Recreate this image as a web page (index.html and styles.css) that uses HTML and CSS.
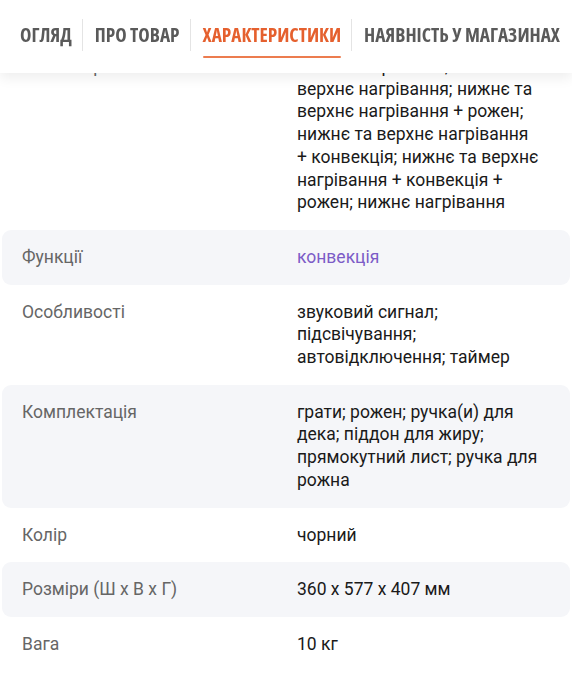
FILE: index.html
```html
<!DOCTYPE html>
<html lang="uk">
<head>
<meta charset="utf-8">
<title>Характеристики</title>
<link rel="stylesheet" href="styles.css">
</head>
<body>
<nav class="tabs">
  <a class="tab"><span class="tab-label">ОГЛЯД</span></a>
  <div class="sep"></div>
  <a class="tab"><span class="tab-label">ПРО ТОВАР</span></a>
  <div class="sep"></div>
  <a class="tab tab-active"><span class="tab-label">ХАРАКТЕРИСТИКИ</span><span class="tab-underline"></span></a>
  <div class="sep"></div>
  <a class="tab"><span class="tab-label">НАЯВНІСТЬ У МАГАЗИНАХ</span></a>
</nav>
<main class="specs">
  <div class="spec-row">
    <div class="spec-label">Режими роботи</div>
    <div class="spec-value">нижнє нагрівання; нижнє та<br>верхнє нагрівання; нижнє та<br>верхнє нагрівання + рожен;<br>нижнє та верхнє нагрівання<br>+ конвекція; нижнє та верхнє<br>нагрівання + конвекція +<br>рожен; нижнє нагрівання</div>
  </div>
  <div class="spec-row">
    <div class="spec-label">Функції</div>
    <div class="spec-value"><a class="spec-link">конвекція</a></div>
  </div>
  <div class="spec-row">
    <div class="spec-label">Особливості</div>
    <div class="spec-value">звуковий сигнал;<br>підсвічування;<br>автовідключення; таймер</div>
  </div>
  <div class="spec-row">
    <div class="spec-label">Комплектація</div>
    <div class="spec-value">грати; рожен; ручка(и) для<br>дека; піддон для жиру;<br>прямокутний лист; ручка для<br>рожна</div>
  </div>
  <div class="spec-row">
    <div class="spec-label">Колір</div>
    <div class="spec-value">чорний</div>
  </div>
  <div class="spec-row">
    <div class="spec-label">Розміри (Ш х В х Г)</div>
    <div class="spec-value">360 x 577 x 407 мм</div>
  </div>
  <div class="spec-row">
    <div class="spec-label">Вага</div>
    <div class="spec-value">10 кг</div>
  </div>
</main>
</body>
</html>
```
FILE: styles.css
```css
html, body {
  margin: 0;
  padding: 0;
  background: #ffffff;
}

body {
  font-family: Roboto, "Liberation Sans", sans-serif;
  color: #1a1a1a;
}

.tabs {
  position: fixed;
  top: 0;
  left: 0;
  right: 0;
  z-index: 10;
  height: 73px;
  box-sizing: border-box;
  padding: 19px 0 0 8px;
  display: flex;
  align-items: flex-start;
  background: #ffffff;
  box-shadow: 0 5px 12px rgba(0, 0, 0, 0.07);
  white-space: nowrap;
  overflow: hidden;
}

.tab {
  display: flex;
  flex-direction: column;
  padding: 0 10px 0 12px;
  font-family: "Open Sans", sans-serif;
  font-stretch: 75%;
  font-weight: 700;
  font-size: 19.3px;
  color: #5a5a5a;
  cursor: pointer;
}

.tab-label {
  display: block;
  line-height: 32px;
}

.tab-active {
  color: #e5602e;
}

.tab-underline {
  display: block;
  height: 2px;
  margin-top: 5px;
  background: #ec7c4f;
  border-radius: 1px;
}

.sep {
  flex: none;
  width: 1px;
  height: 32px;
  background: #e4e4e4;
}

.specs {
  padding-top: 39px;
}

.spec-row {
  display: grid;
  grid-template-columns: 275px 1fr;
  margin: 0 2px;
  padding: 16px 4px 16px 20px;
  border-radius: 9px;
  font-size: 17.5px;
  line-height: 22.7px;
  white-space: nowrap;
}

.spec-row:nth-child(even) {
  background: #f5f6f9;
}

.spec-label {
  color: #666666;
}

.spec-value {
  color: #1a1a1a;
}

.spec-link {
  color: #7c5cc7;
  cursor: pointer;
}
```
